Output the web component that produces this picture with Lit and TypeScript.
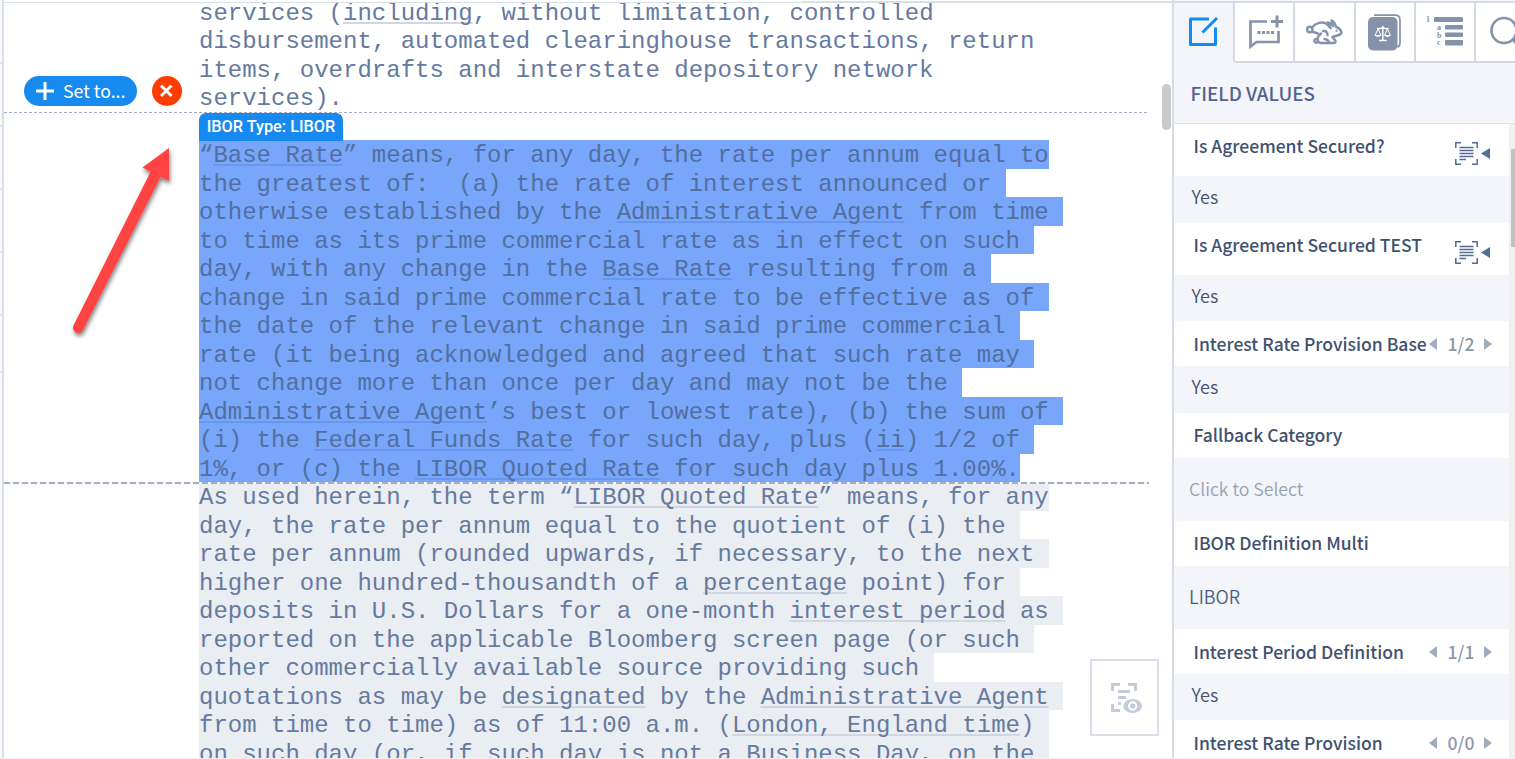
import { LitElement, html, svg, css } from "lit";
import { customElement, property } from "lit/decorators.js";

type Kind = "plain" | "selected" | "muted";

// Defined terms are wrapped in [brackets]; trailing spaces are part of the highlighted run.
const DOCUMENT: { kind: Kind; lines: string[] }[] = [
  {
    kind: "plain",
    lines: [
      "services ([including], without limitation, controlled",
      "disbursement, automated clearinghouse transactions, return",
      "items, overdrafts and interstate depository network",
      "services).",
      " ",
    ],
  },
  {
    kind: "selected",
    lines: [
      "“[Base Rate]” means, for any day, the rate per annum equal to",
      "the greatest of:  (a) the rate of interest announced or ",
      "otherwise established by the [Administrative Agent] from time ",
      "to time as its prime commercial rate as in effect on such ",
      "day, with any change in the [Base Rate] resulting from a ",
      "change in said prime commercial rate to be effective as of ",
      "the date of the relevant change in said prime commercial ",
      "rate (it being acknowledged and agreed that such rate may ",
      "not change more than once per day and may not be the ",
      "[Administrative Agent]’s best or lowest rate), (b) the sum of ",
      "(i) the [Federal Funds Rate] for such day, plus ([ii]) 1/2 of ",
      "1%, or (c) the [LIBOR Quoted Rate] for such day plus 1.00%.",
    ],
  },
  {
    kind: "muted",
    lines: [
      "As used herein, the term “[LIBOR Quoted Rate]” means, for any",
      "day, the rate per annum equal to the quotient of (i) the ",
      "rate per annum (rounded upwards, if necessary, to the next ",
      "higher one hundred-thousandth of a [percentage] point) for ",
      "deposits in U.S. Dollars for a one-month [interest period] as ",
      "reported on the applicable Bloomberg screen page (or such ",
      "other commercially available source providing such ",
      "quotations as may be [designated] by the [Administrative Agent] ",
      "from time to time) as of 11:00 a.m. ([London, England time]) ",
      "on such day (or, if such day is not a Business Day, on the ",
    ],
  },
];

interface Field {
  label: string;
  value: string;
  control: "scan" | "pager" | "none";
  page?: string;
  style?: string;
  lh: number;
  vh: number;
}

const FIELDS: Field[] = [
  { label: "Is Agreement Secured?", value: "Yes", control: "scan", lh: 52, vh: 47 },
  { label: "Is Agreement Secured TEST", value: "Yes", control: "scan", lh: 52, vh: 46 },
  { label: "Interest Rate Provision Base", value: "Yes", control: "pager", page: "1/2", lh: 45, vh: 47 },
  { label: "Fallback Category", value: "Click to Select", control: "none", style: "placeholder", lh: 45, vh: 63 },
  { label: "IBOR Definition Multi", value: "LIBOR", control: "none", style: "choice", lh: 45, vh: 63 },
  { label: "Interest Period Definition", value: "Yes", control: "pager", page: "1/1", lh: 45, vh: 46 },
  { label: "Interest Rate Provision", value: "", control: "pager", page: "0/0", lh: 45, vh: 46 },
];

const scanIcon = svg`
  <g fill="none" stroke="#556a92">
    <path d="M6 .8H.8V6M17 .8h5.200V6M6 22.200H.8V17M17 22.200h5.200V17" stroke-width="1.500"/>
    <path d="M4.500 5.500h14M4.500 8.500h14M4.500 11.500h14M4.500 14.500h14M4.500 17.500h6.500" stroke-width="1.300"/>
  </g>`;

const TAB_ICONS = [
  svg`<g fill="none" stroke="#148bf0" stroke-width="3">
        <path d="M24 5H5.500v25.500h25V13.500" stroke-linejoin="round"/>
        <path d="M17.500 18.500L32 4"/>
      </g>`,
  svg`<g fill="none" stroke="#8492aa">
        <path d="M22 7.500H5.500v25L11.500 28H33.500V17" stroke-width="2.700"/>
        <path d="M32 1.500v12M26 7.500h12" stroke-width="3"/>
        <path d="M12.500 18.500h16.500" stroke-width="3" stroke-dasharray="3 1.500"/>
      </g>`,
  svg`<g fill="none" stroke="#8492aa" stroke-width="2.400" stroke-linejoin="round" stroke-linecap="round">
        <circle cx="4.800" cy="15.500" r="2.700"/>
        <path d="M7.500 13C11 8.500 17 7.500 21 9.500L25.500 14"/>
        <path d="M25.500 14L22.500 8.500q3.500.5 5.500 3.500L26.500 6.500q3.500 1.500 4.500 6.500 4.500 1.500 5.500 5.500-.5 2.500-4.500 3l-4.500 1.500 3 4q.5 2-2 2H15.500q-3-.5-3-4 .2-2.800 3.500-5.500"/>
        <path d="M8 18l5 1.500M24 28.500q-.5-3-4.500-3.500M18 17q4.500-.5 4.500 4"/>
        <path d="M12.500 25q-3.500-.5-3 2.500 1 2 4 .5"/>
      </g><circle cx="31.500" cy="16.800" r="1.100" fill="#8492aa"/>`,
  svg`<path d="M8 1.200H29q5 0 5 5V29q0 3-2.500 4.300" fill="none" stroke="#8492aa" stroke-width="1.700"/>
      <rect x="2" y="3" width="29.500" height="33.500" rx="5" fill="#8492aa"/>
      <g fill="none" stroke="#fff" stroke-width="1.500">
        <path d="M16.800 12v14.500M11 14.300q3 1 5.800-1 3 2 5.800 1M13 26.500h7.600"/>
        <path d="M12 15l-3 6.500M12 15l3 6.500M21.500 15l-3 6.500M21.500 15l3 6.500" stroke-width="1"/>
      </g>
      <path d="M8.500 21h7q-3.500 4-7 0zM18 21h7q-3.500 4-7 0z" fill="#fff"/>`,
  svg`<g fill="#8492aa">
        <rect x="8" y="3" width="29" height="5" rx="1"/>
        <rect x="19" y="11" width="18" height="4.600" rx="1"/>
        <rect x="19" y="18.500" width="18" height="4.600" rx="1"/>
        <rect x="19" y="26" width="18" height="5.500" rx="1"/>
      </g>
      <g fill="#8492aa" class="mini">
        <text x="0" y="8">1</text><text x="11" y="15.500">a</text>
        <text x="11" y="23.500">b</text><text x="11" y="31">c</text>
      </g>`,
  svg`<g fill="none" stroke="#8492aa" stroke-width="2.600"><circle cx="18" cy="16.500" r="12.500"/><path d="M27 25l8 8" stroke-width="4"/></g>`,
];

@customElement("doc-line")
class DocLine extends LitElement {
  @property() text = "";
  @property({ reflect: true }) kind: Kind = "plain";

  static styles = css`
    :host { display: block; height: 28.5px; line-height: 32px; white-space: pre; }
    .run { display: inline-block; height: 28.5px; vertical-align: top; color: #657a9f; }
    :host([kind="selected"]) .run { background: #77a6fb; color: #536f9f; }
    :host([kind="muted"]) .run { background: #eaedf2; }
    .term {
      text-decoration: underline 2px #d2d6e0;
      text-underline-offset: 2px;
      text-decoration-skip-ink: none;
    }
    :host([kind="selected"]) .term { text-decoration-color: #6797ef; }
  `;

  render() {
    const parts = this.text.split(/[\[\]]/);
    return html`<span class="run">${parts.map((p, i) => (i % 2 ? html`<span class="term">${p}</span>` : p))}</span>`;
  }
}

@customElement("field-row")
class FieldRow extends LitElement {
  @property({ attribute: false }) field!: Field;

  static styles = css`
    :host { display: block; flex: none; }
    .label {
      display: flex; align-items: center; justify-content: space-between;
      box-sizing: border-box; padding: 0 17px 0 19.5px; background: #fff;
      color: #41516f; font-weight: 500; font-size: 17.55px; white-space: nowrap;
    }
    .label.with-none { padding-bottom: 1px; }
    .label.with-scan { padding-bottom: 8px; padding-right: 19px; }
    .value {
      display: flex; align-items: center; box-sizing: border-box;
      padding: 0 17.5px 7px; background: #f4f5fa; color: #43526d; font-weight: 350;
    }
    .value.placeholder { color: #98a1b2; padding: 0 15px 3px; font-size: 17.7px; }
    .value.choice { color: #4c5f83; padding: 0 15px 3px; }
    .pager { display: flex; align-items: center; color: #8d97ab; }
    .count { width: 47px; padding-left: 1px; box-sizing: border-box; text-align: center; }
    .tools { display: flex; align-items: center; gap: 3px; padding-top: 15px; }
    svg { display: block; }
  `;

  render() {
    const f = this.field;
    return html`
      <div class="label with-${f.control}" style="height:${f.lh}px">
        <span>${f.label}</span>
        ${f.control === "pager"
          ? html`<span class="pager">
              <svg width="8" height="12"><path d="M8 0v12L0 6z" fill="#a0abc0" /></svg>
              <span class="count">${f.page}</span>
              <svg width="8" height="12"><path d="M0 0v12L8 6z" fill="#a0abc0" /></svg>
            </span>`
          : ""}
        ${f.control === "scan"
          ? html`<span class="tools">
              <svg width="23" height="23">${scanIcon}</svg>
              <svg width="9" height="11"><path d="M9 0v11L0 5.500z" fill="#556d99" /></svg>
            </span>`
          : ""}
      </div>
      <div class="value ${f.style ?? ""}" style="height:${f.vh}px">${f.value}</div>
    `;
  }
}

@customElement("app-root")
class AppRoot extends LitElement {
  static styles = css`
    :host {
      display: flex; box-sizing: border-box; position: relative;
      width: 1515px; height: 759px; overflow: hidden; background: #fff;
      font-family: "Noto Sans CJK SC", "Open Sans", sans-serif; font-size: 18px; line-height: 24px;
    }
    .rail { flex: none; width: 2px; border-right: 2px solid #d9dde6; display: flex; flex-direction: column; background: #f8f9fb; padding-top: 1px; }
    .rail i { flex: none; height: 61px; border-bottom: 2px solid #dfe2ea; }
    .rail i:last-child { height: 55px; }
    .doc { flex: 1; position: relative; overflow: hidden; }
    .text { margin-top: -2.5px; padding-left: 195px; font: 24px "Liberation Mono", monospace; }
    .topline { position: absolute; left: 0; right: 0; top: 2px; height: 1px; background: #d9dfe7; }
    .topline::after { content: ""; position: absolute; left: 798px; right: 0; top: -1px; height: 2px; background: #d9dfe7; }
    .rule { position: absolute; left: 0; width: 1145px; }
    .rule.thin { top: 112px; height: 1px; background: repeating-linear-gradient(90deg, #a1abc3 0 3px, transparent 3px 5px); }
    .rule.thick { top: 482px; height: 2px; background: repeating-linear-gradient(90deg, #a5aebf 0 6px, #f3f5f9 6px 9px); }
    .actions { position: absolute; left: 20px; top: 76px; display: flex; gap: 15px; }
    .set {
      width: 113px; height: 30px; border-radius: 15px; background: #178af0; color: #fff;
      display: flex; align-items: center; gap: 9px; box-sizing: border-box; padding: 0 0 1px 12px; font-size: 17.7px;
    }
    .set span { padding-bottom: 2px; }
    .close { width: 30px; height: 30px; border-radius: 50%; background: #ff3d00; }
    .tag {
      position: absolute; left: 195px; top: 113px; width: 144px; height: 28px; border-radius: 7px 7px 0 0;
      background: #168af0; color: #fff; font: 500 16.3px/27px Roboto, sans-serif; text-align: center; white-space: nowrap;
    }
    .arrow { position: absolute; left: 56px; top: 136px; }
    .preview {
      position: absolute; left: 1086px; top: 659px; width: 65px; height: 73px;
      border: 2px solid #dadee8; background: #fff; display: flex; align-items: center; justify-content: center;
    }
    .preview svg { padding-left: 3px; }
    .thumb { position: absolute; left: 1158px; top: 84px; width: 9px; height: 46px; border-radius: 5px; background: #cacaca; }
    .panel {
      flex: none; width: 341px; border-left: 2px solid #d7dbe5; background: #f4f5fa;
      display: flex; flex-direction: column; overflow: hidden;
    }
    .tabs { display: flex; flex: none; height: 62px; margin-top: 1px; border-top: 2px solid #d6dce5; box-sizing: border-box; }
    .tab {
      flex: none; width: 60.3px; box-sizing: border-box; background: #fff;
      border-right: 2px solid #d3d8e2; border-bottom: 2px solid #d3d8e2; overflow: hidden;
      display: flex; justify-content: center; padding-top: 11px;
    }
    .tab.active { background: #f4f5fa; border-bottom-color: transparent; width: 61px; }
    .tab svg { flex: none; }
    .mini { font: 700 8px "Liberation Serif", serif; }
    h2 { margin: 0; flex: none; height: 60px; border-bottom: 1px solid #dbe0ea; padding-left: 16.5px; font-size: 18.8px; line-height: 60px; font-weight: 500; color: #50648f; }
    .body { flex: 1; display: flex; min-height: 0; }
    .fields { width: 335px; flex: none; overflow: hidden; display: flex; flex-direction: column; }
    .track { flex: 1; background: #f0f0f1; padding: 25px 0 0 2px; }
    .grip { height: 98px; background: #c1c1c2; }
    .bottom { position: absolute; left: 0; right: 0; bottom: 0; height: 1px; background: #eff0f1; }
    svg { display: block; }
  `;

  render() {
    return html`
      <div class="rail">${Array.from({ length: 6 }, () => html`<i></i>`)}</div>
      <main class="doc">
        <div class="text">
          ${DOCUMENT.map((p) => p.lines.map((l) => html`<doc-line .text=${l} kind=${p.kind}></doc-line>`))}
        </div>
        <div class="topline"></div>
        <div class="rule thin"></div>
        <div class="rule thick"></div>
        <div class="tag">IBOR Type: LIBOR</div>
        <div class="actions">
          <div class="set">
            <svg width="18" height="18"><path d="M9 0v18M0 9h18" stroke="#fff" stroke-width="3" /></svg>
            <span>Set to...</span>
          </div>
          <div class="close">
            <svg width="30" height="30"><path d="M9 9.500l10.500 10.500M19.500 9.500l-10.500 10.500" stroke="#fff" stroke-width="3" /></svg>
          </div>
        </div>
        <svg class="arrow" width="130" height="215">
          <defs>
            <filter id="shade" x="-20%" y="-20%" width="140%" height="140%">
              <feDropShadow dx="1" dy="3" stdDeviation="2" flood-color="#000" flood-opacity=".5" />
            </filter>
          </defs>
          <g filter="url(#shade)" fill="#ff4343">
            <path d="M109 12L82.500 31.500l8 4.500L13.500 189.500a5 5 0 0 0 9.500 4.500L100.500 41l8.500 4z" />
          </g>
        </svg>
        <div class="preview">
          <svg width="31" height="31" viewBox="0 0 31 31">
            <g fill="none" stroke="#c5cbd8" stroke-width="3">
              <path d="M9 2.500H1.500V9M17 2.500h7.500V9M9 28.500H1.500V22" />
              <path d="M7 9.500h12M7 15.500h8M7 21.500h3" stroke-width="2.800" />
            </g>
            <ellipse cx="21.700" cy="24" rx="9.300" ry="7" fill="#c5cbd8" />
            <circle cx="21.700" cy="24" r="3.700" fill="#c5cbd8" stroke="#fff" stroke-width="2" />
          </svg>
        </div>
        <div class="thumb"></div>
      </main>
      <aside class="panel">
        <div class="tabs">
          ${TAB_ICONS.map(
            (icon, i) => html`<div class="tab ${i === 0 ? "active" : ""}"><svg width="38" height="38">${icon}</svg></div>`
          )}
        </div>
        <h2>FIELD VALUES</h2>
        <div class="body">
          <div class="fields">${FIELDS.map((f) => html`<field-row .field=${f}></field-row>`)}</div>
          <div class="track"><div class="grip"></div></div>
        </div>
      </aside>
      <div class="bottom"></div>
    `;
  }
}
